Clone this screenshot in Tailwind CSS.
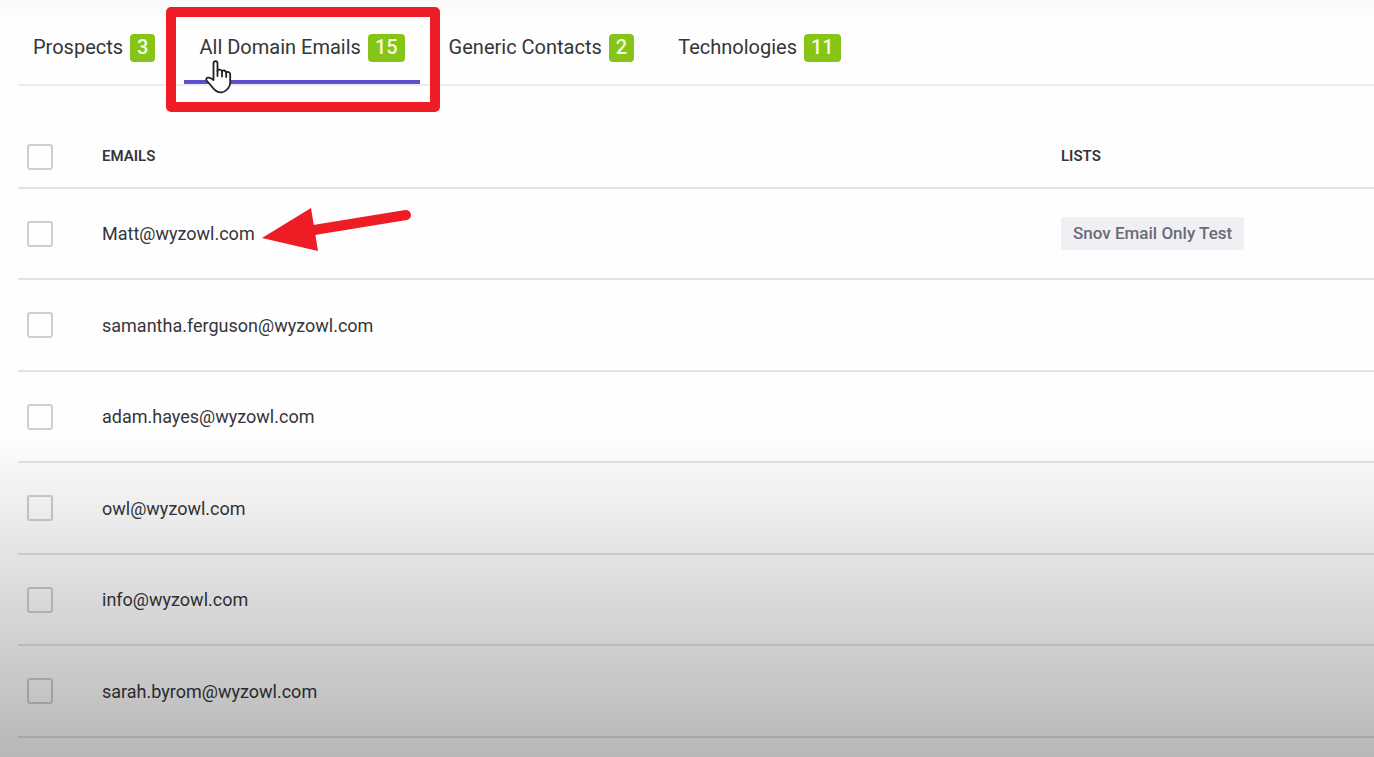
<!DOCTYPE html>
<html lang="en">
<head>
    <meta charset="UTF-8">
    <meta name="viewport" content="width=device-width, initial-scale=1.0">
    <title>Domain Search - Emails</title>
    <script src="https://cdn.jsdelivr.net/npm/@tailwindcss/browser@4"></script>
</head>
<body class="bg-[#fefefe] font-['Roboto',sans-serif] text-[#35353b]">
    <div class="relative min-h-screen overflow-hidden bg-linear-to-b from-[#f9f9f9] to-[#fefefe] to-[24px] pl-[18px]">
        <!-- Tabs -->
        <nav class="flex h-[86px] items-end gap-[14px] border-b-2 border-[#ececee] text-[20px]">
            <a href="#prospects" class="flex h-[62px] gap-[7px] px-[15px] pt-3 leading-[26px]">
                Prospects
                <span class="h-7 rounded-sm bg-[#86c517] px-[7px] font-medium text-[#f3fbdc]">3</span>
            </a>
            <a href="#emails" class="relative flex h-[62px] gap-[7px] border-b-4 border-[#5b4fd0] px-[15px] pt-3 leading-[26px]">
                All Domain Emails
                <span class="h-7 rounded-sm bg-[#86c517] px-[7px] font-medium text-[#f3fbdc]">15</span>
                <span class="absolute -left-[18px] -right-5 -top-[15px] h-[105px] rounded-[5px] border-10 border-[#ee1c25]"></span>
                <svg class="absolute left-5 top-[37px] h-9 w-8" viewBox="0 0 32 36" fill="#fff" stroke="#222" stroke-width="1.8" stroke-linejoin="round" stroke-linecap="round">
                    <path d="M9.500 21V4.500C9.500 1.200 13.500 1.200 13.500 4.500V12C14 10 17.500 10.200 18 12.500C18.800 10.800 21.800 11.200 22.200 13.500C23.600 12.200 26.200 13.200 26.200 15.500V24C26.200 26.500 25 28.500 23.500 30C20 34 15 34.500 11.500 31.500C9.500 30 8.500 28.500 7 26.500L2.600 21.500C1 18.800 5 17 9.500 21Z"/>
                    <path d="M13.500 12V17M18 12.500V17.500M22.200 13.500V18" fill="none"/>
                </svg>
            </a>
            <a href="#contacts" class="flex h-[62px] gap-[7px] px-[15px] pt-3 leading-[26px]">
                Generic Contacts
                <span class="h-7 rounded-sm bg-[#86c517] px-[7px] font-medium text-[#f3fbdc]">2</span>
            </a>
            <a href="#technologies" class="flex h-[62px] gap-[7px] px-[15px] pt-3 leading-[26px]">
                Technologies
                <span class="h-7 rounded-sm bg-[#86c517] px-[7px] font-medium text-[#f3fbdc]">11</span>
            </a>
        </nav>

        <!-- Emails table -->
        <table class="mt-10 w-full table-fixed border-separate border-spacing-0 text-left text-[18px] [&_td]:border-b-2 [&_td]:border-[#e3e3e5] [&_th]:border-b-2 [&_th]:border-[#e3e3e5] [&_input]:block [&_input]:size-[26px] [&_input]:appearance-none [&_input]:rounded-[3px] [&_input]:border-2 [&_input]:border-[#cfcfd1]">
            <colgroup>
                <col class="w-[84px]">
                <col>
                <col class="w-[313px]">
            </colgroup>
            <thead>
                <tr class="h-[63px] text-[15px]">
                    <th class="pl-[9px]"><input type="checkbox" aria-label="Select all emails"></th>
                    <th class="font-semibold">EMAILS</th>
                    <th class="font-semibold">LISTS</th>
                </tr>
            </thead>
            <tbody>
                <tr class="h-[91px]">
                    <td class="pl-[9px]"><input type="checkbox" id="email-1"></td>
                    <td>
                        <div class="relative">
                            <label for="email-1">Matt@wyzowl.com</label>
                            <svg class="absolute -top-3 left-40 h-11 w-[150px]" viewBox="0 0 150 44" fill="#ee1c25">
                                <path d="M0 30L49 0L56 43Z"/>
                                <path d="M52 22L144 7" stroke="#ee1c25" stroke-width="10" stroke-linecap="round"/>
                            </svg>
                        </div>
                    </td>
                    <td><span class="block w-fit rounded-xs bg-[#f0f0f4] px-3 text-[17px] font-medium leading-[33px] text-[#6b6b75]">Snov Email Only Test</span></td>
                </tr>
                <tr class="h-[92px]">
                    <td class="pl-[9px]"><input type="checkbox" id="email-2"></td>
                    <td><label for="email-2">samantha.ferguson@wyzowl.com</label></td>
                    <td></td>
                </tr>
                <tr class="h-[91px]">
                    <td class="pl-[9px]"><input type="checkbox" id="email-3"></td>
                    <td><label for="email-3">adam.hayes@wyzowl.com</label></td>
                    <td></td>
                </tr>
                <tr class="h-[92px]">
                    <td class="pl-[9px]"><input type="checkbox" id="email-4"></td>
                    <td><label for="email-4">owl@wyzowl.com</label></td>
                    <td></td>
                </tr>
                <tr class="h-[91px]">
                    <td class="pl-[9px]"><input type="checkbox" id="email-5"></td>
                    <td><label for="email-5">info@wyzowl.com</label></td>
                    <td></td>
                </tr>
                <tr class="h-[92px]">
                    <td class="pl-[9px]"><input type="checkbox" id="email-6"></td>
                    <td><label for="email-6">sarah.byrom@wyzowl.com</label></td>
                    <td></td>
                </tr>
            </tbody>
        </table>

        <!-- Bottom shade -->
        <div class="pointer-events-none absolute inset-x-0 bottom-0 h-[325px] bg-linear-to-b from-black/0 to-black/28"></div>
    </div>
</body>
</html>
